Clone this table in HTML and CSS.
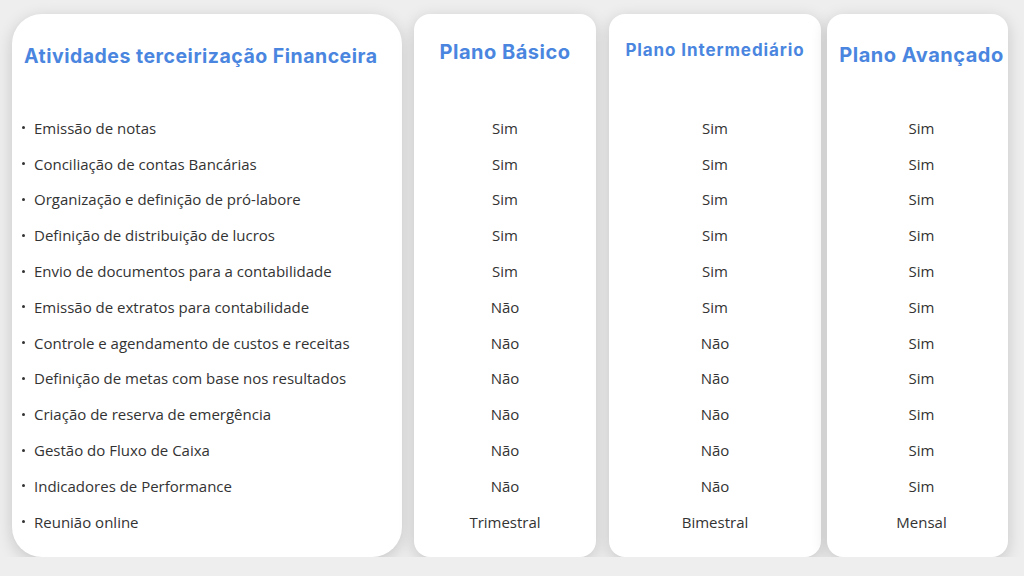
FILE: index.html
```html
<!DOCTYPE html>
<html lang="pt-BR">
<head>
    <meta charset="UTF-8">
    <meta name="viewport" content="width=device-width, initial-scale=1.0">
    <title>Planos de terceirização financeira</title>
    <link rel="stylesheet" href="styles.css">
</head>
<body>
    <div class="plans">
        <div class="card card-activities">
            <h2 class="card-title">Atividades terceirização Financeira</h2>
            <ul class="rows activity-list">
                <li>Emissão de notas</li>
                <li>Conciliação de contas Bancárias</li>
                <li>Organização e definição de pró-labore</li>
                <li>Definição de distribuição de lucros</li>
                <li>Envio de documentos para a contabilidade</li>
                <li>Emissão de extratos para contabilidade</li>
                <li>Controle e agendamento de custos e receitas</li>
                <li>Definição de metas com base nos resultados</li>
                <li>Criação de reserva de emergência</li>
                <li>Gestão do Fluxo de Caixa</li>
                <li>Indicadores de Performance</li>
                <li>Reunião online</li>
            </ul>
        </div>

        <div class="card card-basic">
            <h2 class="card-title">Plano Básico</h2>
            <ul class="rows">
                <li>Sim</li>
                <li>Sim</li>
                <li>Sim</li>
                <li>Sim</li>
                <li>Sim</li>
                <li>Não</li>
                <li>Não</li>
                <li>Não</li>
                <li>Não</li>
                <li>Não</li>
                <li>Não</li>
                <li>Trimestral</li>
            </ul>
        </div>

        <div class="card card-mid">
            <h2 class="card-title">Plano Intermediário</h2>
            <ul class="rows">
                <li>Sim</li>
                <li>Sim</li>
                <li>Sim</li>
                <li>Sim</li>
                <li>Sim</li>
                <li>Sim</li>
                <li>Não</li>
                <li>Não</li>
                <li>Não</li>
                <li>Não</li>
                <li>Não</li>
                <li>Bimestral</li>
            </ul>
        </div>

        <div class="card card-advanced">
            <h2 class="card-title">Plano Avançado</h2>
            <ul class="rows">
                <li>Sim</li>
                <li>Sim</li>
                <li>Sim</li>
                <li>Sim</li>
                <li>Sim</li>
                <li>Sim</li>
                <li>Sim</li>
                <li>Sim</li>
                <li>Sim</li>
                <li>Sim</li>
                <li>Sim</li>
                <li>Mensal</li>
            </ul>
        </div>
    </div>
</body>
</html>
```

FILE: styles.css
```css
body {
    margin: 0;
    background-color: #eeeeee;
    font-family: "Open Sans", "Liberation Sans", sans-serif;
    color: #333;
}

.plans {
    display: flex;
    gap: 12px;
    padding: 14px 12px 0 12px;
}

.card {
    background-color: white;
    border-radius: 16px;
    box-shadow: 0 4px 16px rgba(0,0,0,0.17);
    height: 543px;
    box-sizing: border-box;
    padding-bottom: 17px;
}

.card-activities {
    width: 390px;
    border-radius: 30px;
}

.card-basic {
    width: 182px;
}

.card-mid {
    width: 212px;
    margin-left: 1px;
}

.card-advanced {
    width: 181px;
    margin-left: -6px;
}

.card-title {
    height: 96px;
    box-sizing: border-box;
    margin: 0;
    font-family: Inter, "Open Sans", sans-serif;
    font-weight: 700;
    color: #4a86e0;
    white-space: nowrap;
    text-align: center;
}

.card-activities .card-title {
    text-align: left;
    padding: 30px 0 0 12px;
    font-size: 19.5px;
    letter-spacing: 0.5px;
}

.card-basic .card-title {
    padding-top: 26px;
    font-size: 20px;
    letter-spacing: 0.5px;
}

.card-mid .card-title {
    padding-top: 26px;
    font-size: 17px;
    letter-spacing: 0.9px;
}

.card-advanced .card-title {
    padding-top: 29px;
    font-size: 20px;
    letter-spacing: 0.5px;
    margin-right: -8px;
}

.rows {
    list-style: none;
    margin: 0;
    padding: 0;
}

.rows li {
    height: 35.8px;
    display: flex;
    align-items: center;
    justify-content: center;
    font-size: 15px;
}

.card-advanced .rows {
    padding-left: 8px;
}

.activity-list li {
    justify-content: flex-start;
    padding-left: 10px;
}

.activity-list li::before {
    content: "";
    width: 3px;
    height: 3px;
    border-radius: 50%;
    background-color: #333;
    margin-right: 9px;
}
```
